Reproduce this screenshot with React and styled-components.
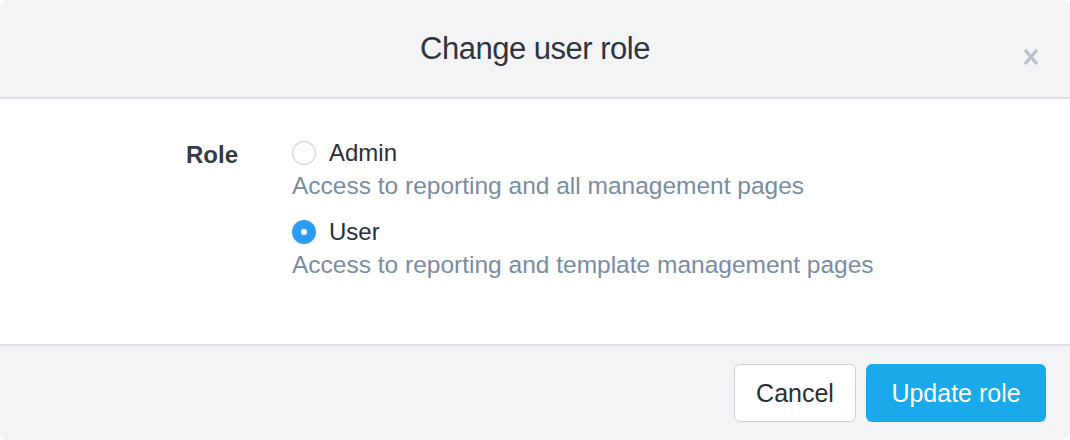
import React from "react";
import styled, { createGlobalStyle } from "styled-components";

const Global = createGlobalStyle`
  html, body { margin: 0; padding: 0; background: #fff; }
  body { font-family: "Liberation Sans", Arial, sans-serif; }
`;

const Dialog = styled.div`
  width: 1070px; height: 440px; box-sizing: border-box;
  border-radius: 8px; overflow: hidden;
  display: flex; flex-direction: column; background: #fff;
`;
const Header = styled.div`
  height: 97px; flex: none; background: #f3f4f6;
  border-bottom: 2px solid #dde1e8;
  display: flex; align-items: center; justify-content: center; position: relative;
`;
const Title = styled.h2`
  margin: 0; font-weight: 300; font-size: 31px; color: #2f3540; letter-spacing: -0.5px;
  font-family: "Liberation Sans", Arial, sans-serif;
`;
const Close = styled.button`
  position: absolute; right: 28px; top: 46px; border: 0; background: none; padding: 0;
  width: 22px; height: 22px; cursor: pointer;
`;
const Body = styled.div`
  flex: 1; display: grid; grid-template-columns: 292px 1fr; padding-top: 40px;
`;
const Label = styled.div`
  justify-self: end; margin-right: 54px; margin-top: 2px;
  font-weight: bold; font-size: 24px; color: #333a44;
`;
const Options = styled.div` display: flex; flex-direction: column; gap: 18px; `;
const Option = styled.label` display: flex; flex-direction: column; gap: 5px; `;
const OptionRow = styled.div` display: flex; align-items: center; gap: 13px; font-size: 24px; color: #2b2f36; `;
const Radio = styled.span`
  width: 24px; height: 24px; border-radius: 50%; box-sizing: border-box; flex: none;
  border: ${p => p.$checked ? "none" : "1.5px solid #c3c8d0"};
  background: ${p => p.$checked ? "#2e9cf5" : "#fff"};
  display: flex; align-items: center; justify-content: center;
  &::after { content: ""; width: 6px; height: 6px; border-radius: 50%; background: #fff; display: ${p => p.$checked ? "block" : "none"}; }
`;
const Desc = styled.div` font-size: 24.5px; color: #7a8ca3; `;
const Footer = styled.div`
  height: 94px; flex: none; background: #f3f4f6; border-top: 2px solid #dde1e8;
  display: flex; align-items: center; justify-content: flex-end; gap: 10px; padding-right: 24px;
`;
const Button = styled.button`
  height: 58px; padding: 0 16px; border-radius: 6px; font-size: 25px;
  font-family: "Liberation Sans", Arial, sans-serif; cursor: pointer;
  border: ${p => p.$primary ? "none" : "1.5px solid #ccd1d9"};
  background: ${p => p.$primary ? "#1aa9ea" : "#fff"};
  color: ${p => p.$primary ? "#fff" : "#2b2f36"};
  min-width: ${p => p.$primary ? "180px" : "122px"};
`;

export default function App() {
  return (
    <>
      <Global />
      <Dialog>
        <Header>
          <Title>Change user role</Title>
          <Close aria-label="Close">
            <svg width="22" height="22" viewBox="0 0 22 22">
              <path d="M5 4 L17 18 M17 4 L5 18" stroke="#b9c0cb" strokeWidth="3.2" strokeLinecap="butt" />
            </svg>
          </Close>
        </Header>
        <Body>
          <Label>Role</Label>
          <Options>
            <Option>
              <OptionRow><Radio />Admin</OptionRow>
              <Desc>Access to reporting and all management pages</Desc>
            </Option>
            <Option>
              <OptionRow><Radio $checked />User</OptionRow>
              <Desc>Access to reporting and template management pages</Desc>
            </Option>
          </Options>
        </Body>
        <Footer>
          <Button>Cancel</Button>
          <Button $primary>Update role</Button>
        </Footer>
      </Dialog>
    </>
  );
}
